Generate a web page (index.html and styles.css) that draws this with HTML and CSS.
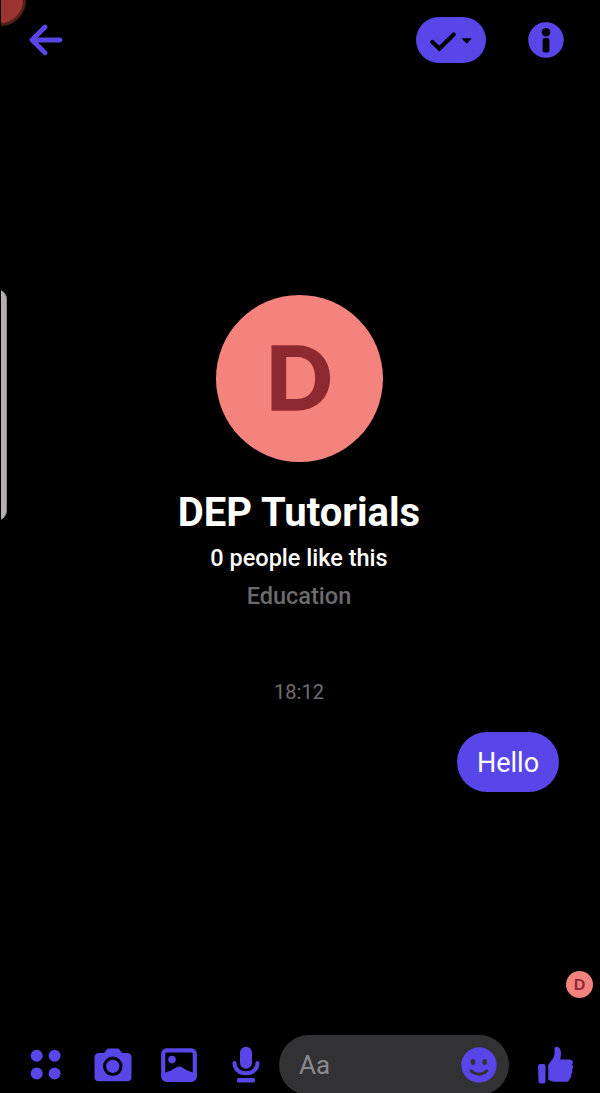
FILE: index.html
```html
<!DOCTYPE html>
<html lang="en">
<head>
<meta charset="utf-8">
<title>DEP Tutorials</title>
<link rel="stylesheet" href="styles.css">
</head>
<body>
<div class="screen">
  <div class="edge-layer">
    <span class="touch-dot"></span>
    <span class="edge-handle"></span>
  </div>
  <header class="topbar">
    <svg class="back" width="36" height="32" viewBox="0 0 36 32"><path d="M17 3 4 16 17 28.800M4.500 16H32" fill="none" stroke="currentColor" stroke-width="4.800" stroke-linecap="round" stroke-linejoin="round"/></svg>
    <div class="mark-done">
      <svg width="70" height="46" viewBox="0 0 70 46"><path d="m16.300 25 7.100 6.600L37.700 17.500" fill="none" stroke="#000" stroke-width="4.200" stroke-linecap="round" stroke-linejoin="miter"/><path d="M45.500 21.200h10.300l-5.100 5.600z" fill="#000"/></svg>
    </div>
    <svg class="info" width="36" height="36" viewBox="0 0 36 36"><circle cx="18" cy="18" r="17.800" fill="currentColor"/><circle cx="18" cy="10.200" r="4.200" fill="#000"/><rect x="14.600" y="16" width="6.800" height="14.400" rx="2" fill="#000"/></svg>
  </header>
  <main class="thread">
    <section class="profile">
      <div class="avatar"><span>D</span></div>
      <h1 class="name">DEP Tutorials</h1>
      <p class="likes">0 people like this</p>
      <p class="category">Education</p>
    </section>
    <time class="timestamp">18:12</time>
    <div class="bubble">Hello</div>
    <div class="seen"><span>D</span></div>
  </main>
  <footer class="composer">
    <svg class="apps" width="32" height="32" viewBox="0 0 32 32" fill="currentColor"><circle cx="6.700" cy="6.700" r="6"/><circle cx="24.600" cy="6.700" r="6"/><circle cx="6.700" cy="24.600" r="6"/><circle cx="24.600" cy="24.600" r="6"/></svg>
    <svg class="camera" width="38" height="34" viewBox="0 0 38 34"><path d="M5 5h3.500c1.700 0 2.400-1 3.500-2.600C13 .8 14 .5 15.500.5h7c1.500 0 2.600.3 3.600 1.900C27.200 4 28 5 29.700 5H33c3 0 4.500 1.500 4.500 4.500V29c0 3-1.500 4.300-4.500 4.300H5c-3 0-4.500-1.300-4.500-4.300V9.500C.5 6.500 2 5 5 5z" fill="currentColor"/><circle cx="18.800" cy="18.300" r="8.200" fill="none" stroke="#000" stroke-width="3.100"/></svg>
    <svg class="gallery" width="36" height="34" viewBox="0 0 36 34"><rect x="2.200" y="2.400" width="31.600" height="29.400" rx="3.400" fill="none" stroke="currentColor" stroke-width="4.200"/><path d="M3 25c5-1.500 8-3 12-5.500 2-1.300 4.500-1.300 6.500 0 4 2.500 6.500 4 11.500 5.500v7H3z" fill="currentColor"/><circle cx="11" cy="11.600" r="3.800" fill="currentColor"/></svg>
    <svg class="mic" width="28" height="38" viewBox="0 0 28 38"><rect x="8" y=".8" width="12" height="22" rx="6" fill="currentColor"/><path d="M2.500 17c0 6.500 5 10.300 11.500 10.300S25.500 23.500 25.500 17" fill="none" stroke="currentColor" stroke-width="4" stroke-linecap="round"/><rect x="5" y="32" width="18" height="4.600" rx="1.500" fill="currentColor"/></svg>
    <div class="field">
      <span class="placeholder">Aa</span>
      <svg class="smiley" width="36" height="36" viewBox="0 0 36 36"><circle cx="18" cy="18" r="17.700" fill="currentColor"/><ellipse cx="12" cy="15" rx="2.300" ry="3" fill="#323234"/><ellipse cx="23.700" cy="15" rx="2.300" ry="3" fill="#323234"/><path d="M10 23.800c4.500 4.500 11.500 4.500 16 0" fill="none" stroke="#323234" stroke-width="3" stroke-linecap="round"/></svg>
    </div>
    <svg class="thumb" width="37" height="38" viewBox="0 0 37 38" fill="currentColor"><path d="M1 20q0-2 2-2h3.500q2 0 2 2v15.500q0 2-2 2h-3q-2 0-2-2z"/><path d="M17.500 2.500C17.500 0 22.300.2 23.500 4c1 3.200.2 6.500-.2 9.500h9c3.600 0 4.500 3.200 2.800 5 1.500 1.800 1.200 3.900-.1 5 1 1.800.4 3.700-.8 4.800.6 2.100-.2 3.700-1.600 4.400-.5 2.300-2 3.100-4.200 3.100h-9.600c-3 0-5-.6-6.600-1.500-.8-.5-1-1-1-1.900V20.300c0-1.300.3-1.800 1-2.700 2.900-3.500 5.300-6.800 5.300-10.600z"/></svg>
  </footer>
</div>
</body>
</html>
```

FILE: styles.css
```css
* { box-sizing: border-box; }
body { margin: 0; background: #000; font-family: Roboto, sans-serif; }
h1, p { margin: 0; }
svg { display: block; flex: none; }

.screen {
  position: relative;
  display: flex;
  flex-direction: column;
  width: 600px;
  height: 1093px;
  overflow: hidden;
  background: #000;
  color: #5846e9;
}

/* System overlays floating above the conversation */
.edge-layer {
  position: absolute;
  inset: 0 auto 0 1px;
  width: 30px;
  overflow: hidden;
}
.touch-dot {
  position: absolute;
  left: -27px;
  top: -26px;
  width: 52px;
  height: 52px;
  border: 3px solid #54201f;
  border-radius: 50%;
  background: #9c3430;
}
.edge-handle {
  position: absolute;
  left: -12px;
  top: 290px;
  width: 18px;
  height: 230px;
  border-radius: 10px;
  background: #b5afb0;
  border-right: 1px solid #8b8787;
}

.topbar {
  display: flex;
  align-items: center;
  height: 80px;
  padding: 0 36px 0 28px;
}
.mark-done {
  width: 70px;
  height: 46px;
  margin-left: auto;
  border-radius: 23px;
  background: #5846e9;
}
.info { margin-left: 42px; }

.thread {
  display: flex;
  flex: 1;
  flex-direction: column;
  min-height: 0;
}
.profile {
  display: flex;
  flex-direction: column;
  align-items: center;
  padding-top: 215px;
  padding-right: 2px;
}
.avatar, .seen {
  display: flex;
  align-items: center;
  justify-content: center;
  border-radius: 50%;
  background: #f4837d;
  color: #8d2a31;
  font-family: Lato, sans-serif;
  font-weight: 900;
}
.avatar {
  width: 167px;
  height: 167px;
  padding-bottom: 5px;
  font-size: 88px;
  line-height: 162px;
  -webkit-text-stroke: 1.4px #8d2a31;
}
.name {
  margin-top: 27px;
  color: #fff;
  font-size: 40px;
  font-weight: 700;
  line-height: 48px;
}
.likes {
  margin-top: 7px;
  color: #fff;
  font-size: 23.5px;
  font-weight: 500;
  line-height: 28px;
}
.category {
  margin-top: 10px;
  color: #6b6a6c;
  font-size: 23.5px;
  font-weight: 500;
  line-height: 28px;
}
.timestamp {
  margin-top: 70px;
  padding-right: 2px;
  color: #6f6e70;
  font-size: 20px;
  line-height: 24px;
  text-align: center;
}
.bubble {
  align-self: flex-end;
  width: 102px;
  height: 60px;
  margin: 28px 41px 0 0;
  border-radius: 30px;
  background: #5846e9;
  color: #fff;
  font-size: 27px;
  line-height: 62px;
  text-align: center;
}
.seen {
  align-self: flex-end;
  width: 27px;
  height: 27px;
  margin: auto 7px 37px 0;
  font-size: 15px;
  line-height: 27px;
}

.composer {
  display: flex;
  align-items: center;
  height: 58px;
  padding: 2px 26px 0 30px;
}
.camera { margin-left: 32px; }
.gallery { margin-left: 29px; }
.mic { margin-left: 35px; }
.field {
  display: flex;
  flex: none;
  align-items: center;
  justify-content: space-between;
  align-self: flex-start;
  width: 230px;
  height: 60px;
  margin: -2px 0 0 19px;
  padding: 0 12px 0 20px;
  border-radius: 30px;
  background: #323234;
}
.placeholder { color: #8b8a8d; font-size: 26px; line-height: 61px; }
.thumb { margin-left: 28px; }
```
